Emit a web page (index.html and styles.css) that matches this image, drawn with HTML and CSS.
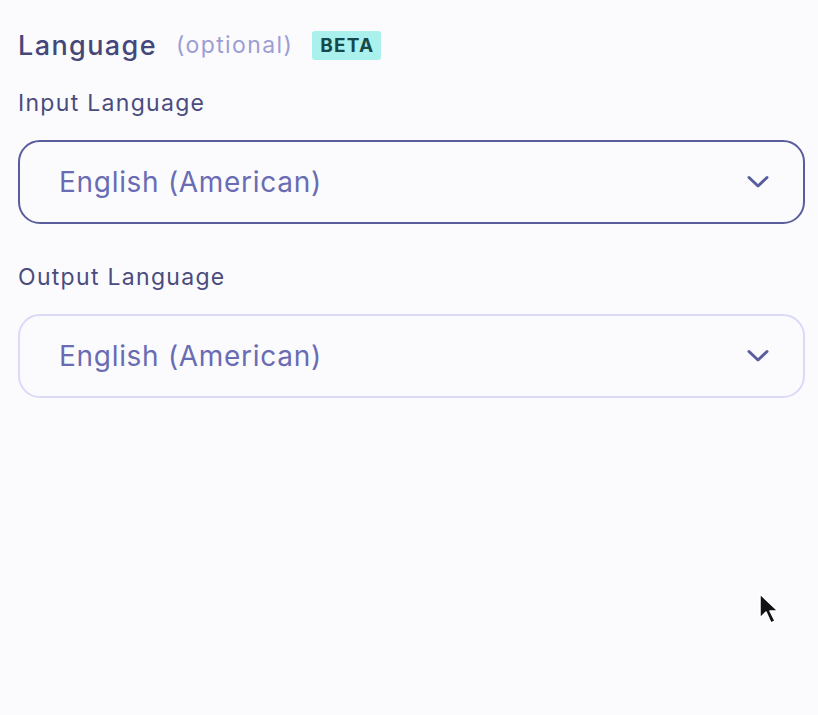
FILE: index.html
```html
<!DOCTYPE html>
<html lang="en">
<head>
<meta charset="utf-8">
<link rel="stylesheet" href="styles.css">
</head>
<body>
<div class="panel">
  <div class="heading">
    <span class="title">Language</span>
    <span class="optional">(optional)</span>
    <span class="badge">BETA</span>
  </div>
  <div class="field">
    <label class="label">Input Language</label>
    <div class="select focused">
      <span class="value">English (American)</span>
      <svg class="chev" width="24" height="16" viewBox="0 0 24 16"><path d="M3 3.5 L12 12 L21 3.5" fill="none" stroke="currentColor" stroke-width="3" stroke-linecap="round" stroke-linejoin="round"/></svg>
    </div>
  </div>
  <div class="field">
    <label class="label">Output Language</label>
    <div class="select">
      <span class="value">English (American)</span>
      <svg class="chev" width="24" height="16" viewBox="0 0 24 16"><path d="M3 3.5 L12 12 L21 3.5" fill="none" stroke="currentColor" stroke-width="3" stroke-linecap="round" stroke-linejoin="round"/></svg>
    </div>
  </div>
</div>
<svg class="cursor" width="24" height="36" viewBox="0 0 24 36"><path d="M2 2 L2 26 L8 20 L13 31 L17 29 L12 19 L20 19 Z" fill="#111" stroke="#fff" stroke-width="1.5" stroke-linejoin="round"/></svg>
</body>
</html>
```
FILE: styles.css
```css
html, body { margin: 0; padding: 0; }
body {
  background: #fbfbfd;
  font-family: Inter, "Noto Sans", sans-serif;
  width: 818px;
  height: 715px;
  overflow: hidden;
  position: relative;
}
.panel {
  padding: 26px 13px 0 18px;
  display: flex;
  flex-direction: column;
}
.heading {
  display: flex;
  align-items: center;
  gap: 19px;
  height: 38px;
}
.title {
  font-size: 27px;
  font-weight: 500;
  color: #45477a;
  letter-spacing: 1.4px;
}
.optional {
  font-size: 23px;
  color: #9c9ed3;
  letter-spacing: 1.4px;
}
.badge {
  font-size: 19px;
  font-weight: 700;
  color: #17494a;
  background: #aaf0ec;
  padding: 3px 7px 3px 8px;
  border-radius: 3px;
  letter-spacing: 1.2px;
}
.field {
  display: flex;
  flex-direction: column;
}
.label {
  font-size: 23px;
  color: #4a4c7e;
  margin-top: 24px;
  height: 30px;
  line-height: 30px;
  letter-spacing: 1.3px;
}
.field + .field .label { margin-top: 38px; }
.select {
  margin-top: 22px;
  height: 84px;
  box-sizing: border-box;
  border: 2px solid #dadaf8;
  border-radius: 22px;
  display: flex;
  align-items: center;
  justify-content: space-between;
  padding: 0 33px 0 39px;
  background: #fbfbfe;
}
.select.focused { border-color: #5a5d9c; }
.value {
  font-size: 28px;
  color: #6a6cb3;
  letter-spacing: 0.7px;
}
.chev { color: #5a5d9c; }
.cursor {
  position: absolute;
  left: 758px;
  top: 592px;
}
```
